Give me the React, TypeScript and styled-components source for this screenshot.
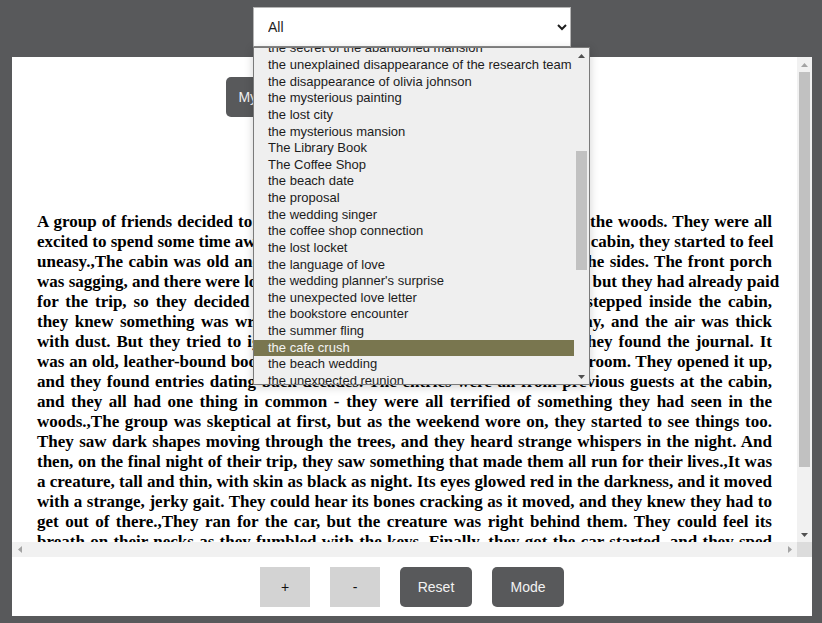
import React, { useLayoutEffect, useRef, useState } from "react";
import styled, { createGlobalStyle } from "styled-components";

const Global = createGlobalStyle`
  html, body { margin: 0; padding: 0; background: #58595b; }
  body { font-family: "Liberation Sans", Arial, sans-serif; }
  * { box-sizing: border-box; }
`;

const Page = styled.div`
  width: 822px;
  height: 623px;
  padding: 7px 10px 0 12px;
  display: flex;
  flex-direction: column;
  align-items: center;
  background: #58595b;
`;

const SelectWrap = styled.div`
  position: relative;
  width: 318px;
  height: 40px;
  margin-bottom: 10px;
  z-index: 5;
`;

const StorySelect = styled.select`
  width: 318px;
  height: 40px;
  border: 1px solid #b5b5b5;
  border-bottom-color: #8a8a8a;
  border-radius: 0;
  background: #fff;
  color: #1e1e1e;
  font-family: "Liberation Sans", Arial, sans-serif;
  font-size: 14px;
  padding: 0 10px;
`;

const Popup = styled.div`
  position: absolute;
  top: 40px;
  left: 0;
  width: 337px;
  height: 338px;
  border: 1px solid #7a7a7a;
  background: #efefef;
  display: flex;
  box-shadow: 0 2px 9px rgba(0, 0, 0, 0.18);
`;

const OptionList = styled.div`
  flex: 1;
  overflow: hidden;
`;

const Option = styled.div<{ $active?: boolean }>`
  height: 16.63px;
  line-height: 16.63px;
  padding-left: 14px;
  white-space: nowrap;
  font-family: "Liberation Sans", Arial, sans-serif;
  font-size: 13px;
  color: ${(p) => (p.$active ? "#f4f4f4" : "#1c1c1c")};
  background: ${(p) => (p.$active ? "#79764f" : "transparent")};
`;

const Panel = styled.div`
  width: 800px;
  height: 559px;
  background: #fff;
  display: flex;
  flex-direction: column;
`;

const ScrollFrame = styled.div`
  height: 500px;
  display: grid;
  grid-template-columns: 1fr 15px;
  grid-template-rows: 1fr 15px;
`;

const Viewport = styled.div`
  overflow: hidden;
`;

const VBar = styled.div<{ $track: string }>`
  display: flex;
  flex-direction: column;
  background: ${(p) => p.$track};
  width: 15px;
`;

const HBar = styled.div`
  display: flex;
  background: #f1f1f1;
`;

const Corner = styled.div`
  background: #dcdcdc;
`;

const ArrowBox = styled.div`
  flex: 0 0 15px;
  width: 15px;
  height: 15px;
  display: flex;
  align-items: center;
  justify-content: center;
`;

const Track = styled.div`
  flex: 1;
  position: relative;
`;

const VThumb = styled.div`
  position: absolute;
  left: 2px;
  right: 2px;
  background: #c1c1c1;
`;

const Content = styled.div`
  padding: 20px 25px 0;
`;

const TopRow = styled.div`
  display: flex;
  justify-content: center;
  gap: 20px;
`;

const DarkButton = styled.button<{ $w?: number }>`
  width: ${(p) => (p.$w ? `${p.$w}px` : "auto")};
  height: 40px;
  padding: 0;
  border: none;
  border-radius: 5px;
  background: #58595b;
  color: #f2f2f2;
  font-family: "Liberation Sans", Arial, sans-serif;
  font-size: 14px;
  white-space: nowrap;
`;

const LightButton = styled.button`
  width: 50px;
  height: 40px;
  border: none;
  border-radius: 0;
  background: #d3d3d3;
  color: #111;
  font-family: "Liberation Sans", Arial, sans-serif;
  font-size: 14px;
`;

const Title = styled.h2`
  margin: 30px 0 37px;
  text-align: center;
  font-family: "Liberation Serif", "Times New Roman", serif;
  font-size: 24px;
  line-height: 28px;
`;

const Story = styled.p`
  margin: 0 0 23px;
  font-family: "Liberation Serif", "Times New Roman", serif;
  font-weight: bold;
  font-size: 17px;
  line-height: 20px;
  text-align: justify;
  text-align-last: justify;
  white-space: nowrap;
  color: #000;
`;

const BottomBar = styled.div`
  display: flex;
  justify-content: center;
  gap: 20px;
  padding-top: 10px;
`;

type Dir = "up" | "down" | "left" | "right";
const TRI: Record<Dir, string> = {
  up: "0,4 3.5,0 7,4",
  down: "0,0 3.5,4 7,0",
  left: "4,0 0,3.5 4,7",
  right: "0,0 4,3.5 0,7",
};

function Arrow({ dir, color }: { dir: Dir; color: string }) {
  const horiz = dir === "left" || dir === "right";
  return (
    <ArrowBox>
      <svg width={horiz ? 4 : 7} height={horiz ? 7 : 4} viewBox={horiz ? "0 0 4 7" : "0 0 7 4"}>
        <polygon points={TRI[dir]} fill={color} />
      </svg>
    </ArrowBox>
  );
}

function VScrollbar({
  track,
  upColor,
  downColor,
  thumbTop,
  thumbHeight,
}: {
  track: string;
  upColor: string;
  downColor: string;
  thumbTop: number;
  thumbHeight: number;
}) {
  return (
    <VBar $track={track}>
      <Arrow dir="up" color={upColor} />
      <Track>
        <VThumb style={{ top: thumbTop, height: thumbHeight }} />
      </Track>
      <Arrow dir="down" color={downColor} />
    </VBar>
  );
}

const options = [
  "All",
  "the haunted house",
  "the cabin in the woods",
  "the curse of the old mansion",
  "the ghost of the lighthouse",
  "the missing hikers",
  "the whispering woods",
  "the abandoned asylum",
  "the shadow in the attic",
  "the midnight visitor",
  "the haunted hotel",
  "the cursed doll",
  "the forgotten cemetery",
  "the creature in the lake",
  "the night train",
  "the secret of the abandoned mansion",
  "the unexplained disappearance of the research team",
  "the disappearance of olivia johnson",
  "the mysterious painting",
  "the lost city",
  "the mysterious mansion",
  "The Library Book",
  "The Coffee Shop",
  "the beach date",
  "the proposal",
  "the wedding singer",
  "the coffee shop connection",
  "the lost locket",
  "the language of love",
  "the wedding planner's surprise",
  "the unexpected love letter",
  "the bookstore encounter",
  "the summer fling",
  "the cafe crush",
  "the beach wedding",
  "the unexpected reunion",
  "the secret admirer",
  "the first date",
  "the holiday romance",
  "the second chance",
  "the masquerade ball",
  "the lost treasure",
  "the pirate ship",
  "the jungle expedition",
  "the desert island",
  "the time machine",
  "the space voyage",
  "the dragon's lair",
  "the enchanted forest",
  "the wizard's apprentice",
  "the magic sword",
  "the last kingdom",
];

const storyLines = [
  "A group of friends decided to go on a weekend getaway to a small cabin in the woods. They were all",
  "excited to spend some time away from the city. When they arrived at the old cabin, they started to feel",
  "uneasy.,The cabin was old and run-down, with old peeling paint on all of the sides. The front porch",
  "was sagging, and there were loose boards everywhere. They wanted to leave, but they had already paid",
  "for the trip, so they decided to stay and make the best of it. Once they stepped inside the cabin,",
  "they knew something was wrong. There was a strange smell in the hallway, and the air was thick",
  "with dust. But they tried to ignore it and unpack their bags. That night, they found the journal. It",
  "was an old, leather-bound book, hidden under a loose floorboard in the bedroom. They opened it up,",
  "and they found entries dating back decades. The entries were all from previous guests at the cabin,",
  "and they all had one thing in common - they were all terrified of something they had seen in the",
  "woods.,The group was skeptical at first, but as the weekend wore on, they started to see things too.",
  "They saw dark shapes moving through the trees, and they heard strange whispers in the night. And",
  "then, on the final night of their trip, they saw something that made them all run for their lives.,It was",
  "a creature, tall and thin, with skin as black as night. Its eyes glowed red in the darkness, and it moved",
  "with a strange, jerky gait. They could hear its bones cracking as it moved, and they knew they had to",
  "get out of there.,They ran for the car, but the creature was right behind them. They could feel its",
  "breath on their necks as they fumbled with the keys. Finally, they got the car started, and they sped",
  "away, leaving the cabin and the creature far behind them. They never spoke of that weekend again,",
  "and none of them ever went back to the cabin in the woods.",
];

type Metrics = { top: number; height: number };

function useThumb(ref: React.RefObject<HTMLDivElement | null>, trackLen: number, scrollTop: number) {
  const [m, setM] = useState<Metrics>({ top: 0, height: trackLen });
  useLayoutEffect(() => {
    const el = ref.current;
    if (!el) return;
    el.scrollTop = scrollTop;
    const total = el.scrollHeight;
    const view = el.clientHeight;
    const h = Math.round((trackLen * view) / total);
    const t = Math.round((trackLen * el.scrollTop) / total);
    setM({ top: t, height: h });
  }, [ref, trackLen, scrollTop]);
  return m;
}

export default function App() {
  const listRef = useRef<HTMLDivElement>(null);
  const viewRef = useRef<HTMLDivElement>(null);
  const listThumb = useThumb(listRef, 336 - 30, 257);
  const viewThumb = useThumb(viewRef, 485 - 30, 0);
  return (
    <>
      <Global />
      <Page>
        <SelectWrap>
          <StorySelect defaultValue="All">
            {options.map((o) => (
              <option key={o} value={o}>
                {o}
              </option>
            ))}
          </StorySelect>
          <Popup>
            <OptionList ref={listRef}>
              {options.map((o) => (
                <Option key={o} $active={o === "the cafe crush"}>
                  {o}
                </Option>
              ))}
            </OptionList>
            <VScrollbar
              track="#efefef"
              upColor="#505050"
              downColor="#505050"
              thumbTop={listThumb.top - 3}
              thumbHeight={listThumb.height}
            />
          </Popup>
        </SelectWrap>
        <Panel>
          <ScrollFrame>
            <Viewport ref={viewRef}>
              <Content>
                <TopRow>
                  <DarkButton $w={92}>My Stories</DarkButton>
                  <DarkButton $w={113}>New Story</DarkButton>
                  <DarkButton $w={113}>Saved Stories</DarkButton>
                </TopRow>
                <Title>The Cabin in the Woods</Title>
                <Story>
                  {storyLines.map((line, i) => (
                    <React.Fragment key={i}>
                      {line}
                      {i < storyLines.length - 1 && <br />}
                    </React.Fragment>
                  ))}
                </Story>
              </Content>
            </Viewport>
            <VScrollbar
              track="#f1f1f1"
              upColor="#a3a3a3"
              downColor="#505050"
              thumbTop={viewThumb.top}
              thumbHeight={viewThumb.height}
            />
            <HBar>
              <Arrow dir="left" color="#a3a3a3" />
              <Track />
              <Arrow dir="right" color="#a3a3a3" />
            </HBar>
            <Corner />
          </ScrollFrame>
          <BottomBar>
            <LightButton>+</LightButton>
            <LightButton>-</LightButton>
            <DarkButton $w={72}>Reset</DarkButton>
            <DarkButton $w={72}>Mode</DarkButton>
          </BottomBar>
        </Panel>
      </Page>
    </>
  );
}
